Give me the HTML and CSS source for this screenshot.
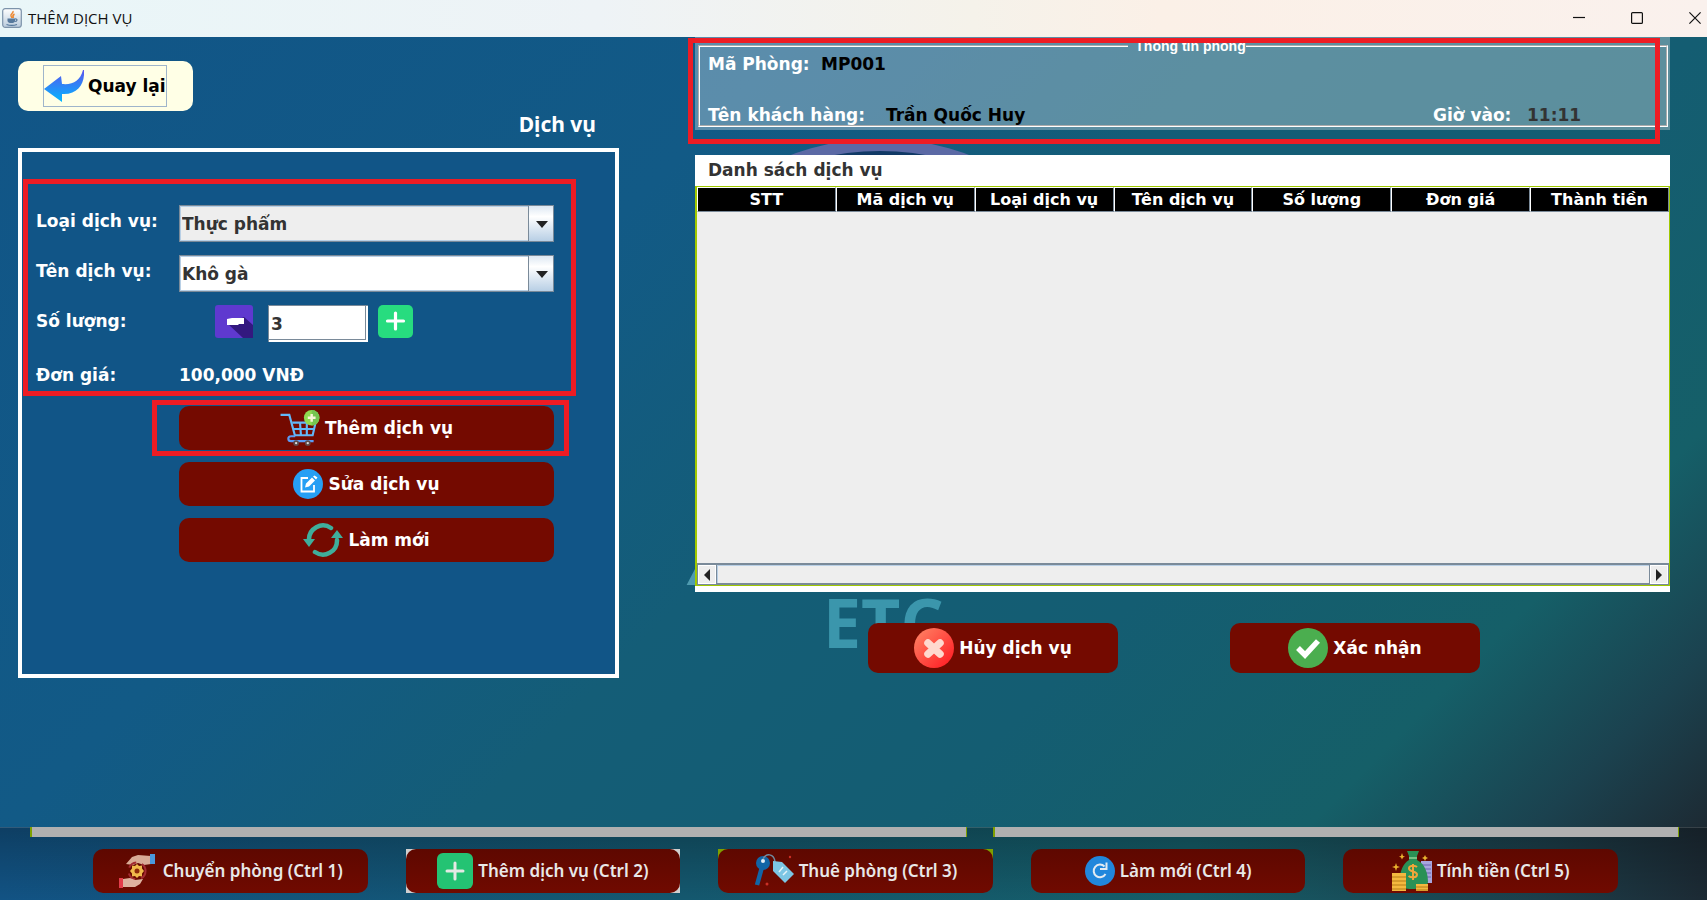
FILE: index.html
```html
<!DOCTYPE html>
<html lang="vi">
<head>
<meta charset="utf-8">
<title>THÊM DỊCH VỤ</title>
<link rel="stylesheet" href="styles.css">
</head>
<body>
<div class="dialog">
  <header class="titlebar">
    <svg class="app-icon" viewBox="0 0 20 20" aria-hidden="true">
      <defs><linearGradient id="ji" x1="0" y1="0" x2="0" y2="1"><stop offset="0" stop-color="#fff"/><stop offset="1" stop-color="#b9cbdc"/></linearGradient></defs>
      <rect x=".7" y=".7" width="18.6" height="18.6" rx="2.5" fill="url(#ji)" stroke="#7d93aa" stroke-width="1.2"/>
      <path d="M11 3c1 2-3 3-2 5l1 2M12.500 6c-2 1-2 2-1 4" fill="none" stroke="#ee8a35" stroke-width="1.500"/>
      <path d="M5.500 10.500h7.500v2c0 2-1.500 2.500-3.700 2.500s-3.800-.5-3.800-2.500z" fill="#56799c"/>
      <path d="M13 11c3-.5 2.500 2.500-.5 2.500M4.500 16.500c3 1 7.500 1 10.500 0" fill="none" stroke="#56799c" stroke-width="1.200"/>
    </svg>
    <h1 class="window-title">THÊM DỊCH VỤ</h1>
    <div class="window-controls">
      <button type="button" class="win-btn" aria-label="Thu nhỏ"><svg viewBox="0 0 12 12"><path d="M0 5.500h12"/></svg></button>
      <button type="button" class="win-btn" aria-label="Phóng to"><svg viewBox="0 0 12 12"><rect x=".6" y=".6" width="10.800" height="10.800" rx="1"/></svg></button>
      <button type="button" class="win-btn" aria-label="Đóng"><svg viewBox="0 0 12 12"><path d="M.4.4l11.200 11.200M11.600.4L.4 11.600"/></svg></button>
    </div>
  </header>

  <main class="workspace">
    <div class="backdrop" aria-hidden="true">
      <span class="ring"></span>
      <span class="mark-a">A</span>
      <span class="mark-etc">ETC</span>
    </div>

    <section class="entry">
      <button type="button" class="back-btn">
        <span class="back-focus">
          <svg class="icon-back" viewBox="0 0 40 32" aria-hidden="true">
            <defs><linearGradient id="bk" x1="0" y1="0" x2="0" y2="1"><stop offset="0" stop-color="#5a55ee"/><stop offset="1" stop-color="#00b8ff"/></linearGradient></defs>
            <path d="M0 19L17 6l1 8c11 1 18-3 21-14h1c1 14-6 25-22 24v8z" fill="url(#bk)"/>
          </svg>
          Quay lại
        </span>
      </button>
      <h2 class="entry-title">Dịch vụ</h2>

      <form class="panel">
        <div class="fields">
          <label for="kind">Loại dịch vụ:</label>
          <span class="combo"><select id="kind" class="muted"><option>Thực phẩm</option></select></span>
          <label for="name">Tên dịch vụ:</label>
          <span class="combo"><select id="name"><option>Khô gà</option></select></span>
          <label for="qty">Số lượng:</label>
          <div class="stepper">
            <button type="button" class="step" aria-label="Giảm">
              <svg class="icon-minus" viewBox="0 0 38 33"><rect width="38" height="33" rx="3" fill="#5f39cf"/><path d="M13 19l16-7 9 8v13H28z" fill="#33187f"/><path d="M12 14l5-1h12v6h-5l-1 1H12z" fill="#fff"/></svg>
            </button>
            <input id="qty" type="text" value="3">
            <button type="button" class="step" aria-label="Tăng">
              <svg class="icon-plus" viewBox="0 0 35 33"><rect width="35" height="33" rx="5" fill="#27dc7f"/><path d="M17.500 8v16M9.500 16h16" stroke="#fff" stroke-width="3.200" stroke-linecap="round"/></svg>
            </button>
          </div>
          <span class="caption">Đơn giá:</span>
          <output class="price">100,000 VNĐ</output>
        </div>

        <div class="highlight">
          <button type="button" class="btn wide">
            <svg class="icon-40" viewBox="0 0 40 37" aria-hidden="true">
              <g fill="none" stroke="#62b8f8" stroke-width="2.200"><path d="M0 5h9l6 22"/><path d="M12 13h24l-3 13H15M13.500 19.500h21M20 13l1 13M27 13v13"/><path d="M15 27H11c-4 0-4 5 0 5h23" stroke="#5c9cf5"/></g>
              <circle cx="16" cy="34" r="3" fill="#5d4b4b"/><circle cx="28" cy="34" r="3" fill="#5d4b4b"/><circle cx="16" cy="34" r="1.200" fill="#ddd"/><circle cx="28" cy="34" r="1.200" fill="#ddd"/>
              <circle cx="32" cy="8" r="8" fill="#8fdb50"/><path d="M32 0a8 8 0 0 1 0 16z" fill="#76c550"/><path d="M32 4v8M28 8h8" stroke="#f8f5d8" stroke-width="2.500"/>
            </svg>
            Thêm dịch vụ
          </button>
        </div>
        <div class="stack">
          <button type="button" class="btn wide">
            <svg class="icon-30" viewBox="0 0 30 30" aria-hidden="true"><circle cx="15" cy="15" r="15" fill="#269ff4"/><path d="M15 9H8.500v13.500H21V16" fill="none" stroke="#fff" stroke-width="1.800"/><path d="M12 18.500l1-4 6-6 3 3-6 6zM20 7.500l1.500-1 3 2-1.500 2z" fill="#fff"/></svg>
            Sửa dịch vụ
          </button>
          <button type="button" class="btn wide">
            <svg class="icon-40" viewBox="0 0 40 34" aria-hidden="true"><g fill="none" stroke="#3fae9b" stroke-width="4.500" stroke-linecap="round"><path d="M6 17A14 14 0 0 1 28 5"/><path d="M34 17A14 14 0 0 1 12 29"/></g><path d="M0 16h12l-6 8zM28 15h12l-6-8z" fill="#3fae9b"/></svg>
            Làm mới
          </button>
        </div>
      </form>
    </section>

    <section class="detail">
      <div class="room">
        <fieldset>
          <legend>Thông tin phòng</legend>
          <dl class="room-row"><dt class="dt-room">Mã Phòng:</dt><dd>MP001</dd></dl>
          <dl class="room-row"><dt class="dt-guest">Tên khách hàng:</dt><dd class="grow">Trần Quốc Huy</dd><dt class="dt-time">Giờ vào:</dt><dd class="time">11:11</dd></dl>
        </fieldset>
        <span class="room-mark"></span>
      </div>

      <div class="list">
        <h2 class="list-title">Danh sách dịch vụ</h2>
        <div class="grid-frame">
          <table>
            <thead><tr><th>STT</th><th>Mã dịch vụ</th><th>Loại dịch vụ</th><th>Tên dịch vụ</th><th>Số lượng</th><th>Đơn giá</th><th>Thành tiền</th></tr></thead>
          </table>
          <div class="scrollbar">
            <button type="button" aria-label="Cuộn trái"><svg viewBox="0 0 6 12"><path d="M6 0v12L0 6z"/></svg></button>
            <span class="track"></span>
            <button type="button" aria-label="Cuộn phải"><svg viewBox="0 0 6 12"><path d="M0 0v12l6-6z"/></svg></button>
          </div>
        </div>
      </div>

      <div class="confirm">
        <button type="button" class="btn big">
          <svg class="icon-sq" viewBox="0 0 40 40" aria-hidden="true"><defs><linearGradient id="cx" x1="0" y1="0" x2="1" y2="1"><stop offset=".1" stop-color="#ff7c60"/><stop offset=".9" stop-color="#ff2127"/></linearGradient></defs><circle cx="20" cy="20" r="20" fill="url(#cx)"/><path d="M14 15l12 11M26 15L14 26" stroke="#ffd9cf" stroke-width="7.500" stroke-linecap="round"/></svg>
          Hủy dịch vụ
        </button>
        <button type="button" class="btn big">
          <svg class="icon-sq" viewBox="0 0 40 40" aria-hidden="true"><circle cx="20" cy="20" r="20" fill="#4bae4f"/><path d="M10 20l7 7 13-14" fill="none" stroke="#fff" stroke-width="5.500"/></svg>
          Xác nhận
        </button>
      </div>
    </section>
  </main>
</div>

<footer class="underlay">
  <div class="strips"><span></span><span></span></div>
  <nav class="shortcuts">
    <div class="slot"><button type="button" class="btn dim">
      <svg class="icon-40" viewBox="0 0 40 34" aria-hidden="true"><path d="M8 10l6-7 6-2 13 1v8l-7 1-6-2-5 2z" fill="#d9ab96"/><path d="M32 0h5v10h-5z" fill="#4a98dc"/><circle cx="19" cy="17" r="8.500" fill="none" stroke="#a32b31" stroke-width="2" stroke-dasharray="9 6"/><path d="M19 10l2 2 3-.5v3l2 2.500-2 2.500v3l-3-.5-2 2-2-2-3 .5v-3L12 17l2-2.500v-3l3 .5z" fill="#f0b94c"/><circle cx="19" cy="17" r="2.500" fill="#8d2a0a"/><path d="M5 25l7-1 5 2 8-1-3 5-5 3H5z" fill="#dfb3a0"/><path d="M1 24h4v10H1z" fill="#e43d4b"/></svg>
      Chuyển phòng (Ctrl 1)
    </button></div>
    <div class="slot light"><button type="button" class="btn dim">
      <svg class="icon-36" viewBox="0 0 36 36" aria-hidden="true"><rect width="36" height="36" rx="6" fill="#24c373"/><path d="M18 10v16M10 18h16" stroke="#e4e9e4" stroke-width="3" stroke-linecap="round"/></svg>
      Thêm dịch vụ (Ctrl 2)
    </button></div>
    <div class="slot lime"><button type="button" class="btn dim">
      <svg class="icon-40" viewBox="0 0 40 34" aria-hidden="true"><circle cx="9" cy="9" r="7" fill="#1265a6"/><circle cx="9" cy="7" r="2" fill="#e5eef5"/><path d="M8 13L3 31" stroke="#1265a6" stroke-width="4.500"/><path d="M9 5c3-6 11-6 12 3" fill="none" stroke="#6f8ba0" stroke-width="1.500"/><path d="M19 7l9 1 12 12-9 9-12-12z" fill="#7cc6e4"/><path d="M25 18l4-5M29 21l4-4" stroke="#e4f3f8" stroke-width="1.500"/><circle cx="36" cy="3" r="1.200" fill="#cc3025"/><circle cx="13" cy="30" r="1.500" fill="#cc3025"/></svg>
      Thuê phòng (Ctrl 3)
    </button></div>
    <div class="slot"><button type="button" class="btn dim">
      <svg class="icon-30" viewBox="0 0 30 30" aria-hidden="true"><circle cx="15" cy="15" r="15" fill="#2187dc"/><path d="M20.500 18a6.300 6.300 0 1 1-1-7.500" fill="none" stroke="#e3ebf2" stroke-width="2"/><path d="M21.500 6.500v6.500H15" fill="none" stroke="#e3ebf2" stroke-width="2"/></svg>
      Làm mới (Ctrl 4)
    </button></div>
    <div class="slot"><button type="button" class="btn dim">
      <svg class="icon-sq" viewBox="0 0 40 40" aria-hidden="true"><path d="M29 10h11v22H29z" fill="#a8a5dd"/><path d="M30 14h9M30 18h9M30 22h9M30 26h9" stroke="#6864b0"/><path d="M15 0h12l-2 5v4c8 4 11 13 11 22 0 8-27 10-28 2-1-10 2-20 9-24V5z" fill="#2a9156"/><path d="M17 7h8" stroke="#77c285" stroke-width="2"/><path d="M25 16c-2-2-8-2-8 1.500s8 2.500 8 6-6 3.500-8.500 1.500M21 13v16" fill="none" stroke="#f1a63a" stroke-width="2"/><path d="M0 22h14v18H0zM24 33h12v7H24z" fill="#f4b83f"/><path d="M0 26h14M0 30h14M0 34h14M0 38h14M24 36h12M24 39h12" stroke="#b67c19"/><path d="M10 2l1 3 2 .5-2 1-1 2-1-2-2-1 2-.5zM4 12l1 3 3 1-3 1-1 3-1-3-3-1 3-1zM33 4l1 2 2 1-2 1-1 2-1-2-2-1 2-1z" fill="#eab32e"/></svg>
      Tính tiền (Ctrl 5)
    </button></div>
  </nav>
</footer>
</body>
</html>
```

FILE: styles.css
```css
* { box-sizing: border-box; }

:root {
  --maroon: #740a00;
  --red: #ed1c24;
  --blue: #115587;
  --ui: "DejaVu Sans", Verdana, sans-serif;
}

body {
  margin: 0;
  min-height: 100vh;
  display: flex;
  flex-direction: column;
  overflow: hidden;
  font: bold 17px/20px var(--ui);
  color: #fff;
}

button, input, select { font: inherit; color: inherit; margin: 0; padding: 0; border: 0; background: none; border-radius: 0; }
h1, h2, dl, dd { margin: 0; font: inherit; }
svg { display: block; flex: none; }

/* Window */
.dialog { flex: 1; display: flex; flex-direction: column; }
.titlebar {
  height: 37px;
  display: flex;
  align-items: center;
  gap: 6px;
  padding: 0 6px 2px 2px;
  background: linear-gradient(90deg, #e9f6f8, #eef3f6 35%, #f5f2ea 57%, #fbf0e7 68%, #faf1ed);
  color: #111;
}
.app-icon { width: 20px; height: 20px; }
.window-title { font: 400 15px/20px "Open Sans", "Noto Sans", sans-serif; }
.window-controls { margin-left: auto; display: flex; gap: 46px; }
.win-btn svg { width: 12px; height: 12px; fill: none; stroke: #111; stroke-width: 1.2; }

.workspace {
  position: relative;
  flex: 1;
  display: grid;
  grid-template-columns: 601fr 975fr;
  gap: 76px;
  align-items: start;
  padding: 0 37px 0 18px;
  background: linear-gradient(135deg, #115587 0%, #125a86 32%, #145d77 50%, #145d72 68%, #155f68 84%, #1b424f 93%, #1d2a33 100%);
}

/* Artwork behind the content */
.backdrop { position: absolute; inset: 0; overflow: hidden; }
.ring { position: absolute; left: 700px; top: 102px; width: 360px; height: 240px; border: 12px solid #5b69a5; border-radius: 50%; background: #113a66; }
.mark-a { position: absolute; left: 690px; top: 496px; font: italic 700 56px/60px "Open Sans", sans-serif; color: #4f9bb0; }
.mark-etc { position: absolute; left: 823px; top: 540px; font: 700 68px/90px "Open Sans", "Noto Sans", sans-serif; color: #3b96ac; }
.entry, .detail { position: relative; }

/* Left column */
.entry { padding-top: 24px; }
.back-btn {
  width: 175px; height: 50px;
  display: flex; align-items: center;
  padding-left: 25px;
  border-radius: 10px;
  background: #ffffe6;
  color: #000;
}
.back-focus { display: flex; align-items: center; gap: 4px; height: 42px; border: 1px solid #9fb5cb; }
.icon-back { width: 40px; height: 32px; }
.entry-title { margin: 0 23px 11px; text-align: right; font: 700 21px/26px "Noto Sans", sans-serif; }

.panel { min-height: 530px; padding: 27px 39px 0 1px; border: 4px solid #fff; background: var(--blue); }
.fields {
  display: grid;
  grid-template-columns: 143px 1fr;
  gap: 13px 0;
  padding: 21px 17px 0 8px;
  border: 5px solid var(--red);
}
.fields label { line-height: 32px; }
.caption, .price { height: 36px; line-height: 40px; }

.combo { position: relative; height: 37px; }
.combo select {
  appearance: none;
  width: 100%; height: 100%;
  padding: 0 30px 0 2px;
  border: 1px solid #7a8a99;
  background: #fff;
  box-shadow: inset 0 0 0 1px #b8cfe5;
  color: #333;
}
.combo select.muted { background: #eee; }
.combo::before {
  content: ""; position: absolute; right: 1px; top: 1px; bottom: 1px; width: 24px;
  border-left: 1px solid #7a8a99;
  background: linear-gradient(#dde8f3, #fff 30%, #b8cfe5);
  pointer-events: none;
}
.combo::after {
  content: ""; position: absolute; right: 6px; top: 16px;
  border: 6px solid transparent; border-top: 7px solid #222; border-bottom: 0;
  pointer-events: none;
}

.stepper { display: flex; align-items: flex-start; height: 37px; padding-left: 36px; }
.icon-minus { width: 38px; height: 33px; }
.icon-plus { width: 35px; height: 33px; }
.stepper input {
  width: 100px; height: 37px;
  margin: 0 10px 0 15px; padding-left: 2px;
  background: #fff; color: #333;
  border: solid #7a8a99; border-width: 1px 0 0 1px;
  box-shadow: inset -2px -2px #fff, inset -3px -3px #7a8a99;
}

.btn {
  display: flex; align-items: center; justify-content: center;
  gap: 5px;
  border-radius: 10px;
  background: var(--maroon);
}
.wide { width: 100%; height: 44px; }
.highlight { margin: 4px 7px 0 129px; padding: 1px 10px 1px 22px; border: 5px solid var(--red); }
.stack { display: grid; gap: 12px; margin: 6px 22px 0 156px; }
.icon-40 { width: 40px; height: 36px; }
.icon-36 { width: 36px; height: 36px; }
.icon-30 { width: 30px; height: 30px; }
.icon-sq { width: 40px; height: 40px; }

/* Right column */
.room { position: relative; height: 93px; padding: 1px 2px 3px 3px; background: rgba(255, 255, 255, .31); }
.room fieldset { height: 89px; margin: 0; padding: 0 0 0 8px; border: 2px groove #fff; }
.room legend { margin: 0 auto; padding: 0 0 0 7px; font: 700 14px/16px "Liberation Sans", sans-serif; }
.room-row { display: flex; }
.room-row + .room-row { margin-top: 31px; }
.room-row dd { color: #000; }
.dt-room { width: 113px; }
.dt-guest { width: 178px; }
.grow { flex: 1; }
.dt-time { width: 94px; }
.room-row .time { width: 139px; color: #333; }
.room-mark { position: absolute; inset: 1px 10px -14px -7px; border: 5px solid var(--red); }

.list { margin-top: 25px; padding-bottom: 6px; background: #fff; }
.list-title { padding: 0 13px; line-height: 31px; color: #333; }
.grid-frame {
  display: flex; flex-direction: column;
  height: 400px;
  border: 1px solid #a0c800; border-left-width: 2px;
  background: #eee;
}
table { width: 100%; table-layout: fixed; border-collapse: separate; border-spacing: 0; font-size: 16px; }
th { height: 25px; padding: 0; background: #000; border: solid 1px; border-color: #fff #7a8a99 #7a8a99 #fff; }
.scrollbar { display: flex; height: 22px; margin-top: auto; border: 1px solid #7a8a99; border-top-width: 2px; }
.scrollbar button { width: 18px; display: flex; align-items: center; justify-content: center; box-shadow: inset 0 0 0 1px #fff; }
.scrollbar svg { width: 6px; height: 12px; fill: #222; }
.track { flex: 1; border: 1px solid #7a8a99; border-top: 0; box-shadow: inset 1px 1px #b8cfe5; }

.confirm { display: flex; justify-content: center; gap: 112px; margin-top: 31px; padding-right: 17px; }
.big { width: 250px; height: 50px; }

/* Main window visible below the dialog */
.underlay {
  height: 73px;
  background:
    linear-gradient(rgba(0, 0, 0, .25), rgba(0, 0, 0, 0)),
    linear-gradient(90deg, #125384, #14586f 40%, #155d68 70%, #1c3f4b 90%, #1c2a34);
  box-shadow: inset 0 1px rgba(255, 255, 255, .15);
}
.strips { display: grid; grid-template-columns: 937fr 686fr; gap: 26px; height: 10px; padding: 0 28px 0 30px; }
.strips span { background: #b0b0b0; border: solid #7ea000; border-width: 0 1px 0 2px; }
.shortcuts { display: grid; grid-template-columns: repeat(5, 1fr); gap: 38px; padding: 12px 89px 0 93px; }
.dim { width: 100%; height: 44px; background: linear-gradient(#5e0800, #700a00); color: #e8e8e8; font: 600 17px/20px "Noto Sans", sans-serif; }
.slot.light { background: #d0d0d0; }
.slot.lime { background: linear-gradient(#7ea000 50%, transparent 50%); }
```
